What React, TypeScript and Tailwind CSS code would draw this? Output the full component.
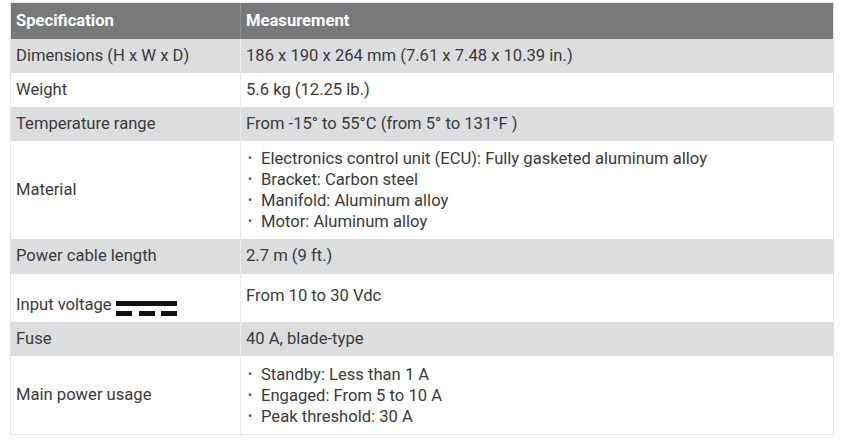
import * as React from 'react';

type Row = { spec: React.ReactNode; value: React.ReactNode; h: string; shaded: boolean };

const Bullets: React.FC<{ items: string[] }> = ({ items }) => (
  <ul className="leading-[21px]">
    {items.map(item => (
      <li key={item} className="flex">
        <span className="w-[15px] pl-[2px] text-[12px] text-[#555]">•</span>
        <span>{item}</span>
      </li>
    ))}
  </ul>
);

// DC symbol: solid line over three dashes
const DcSymbol: React.FC = () => (
  <svg width="61" height="15" viewBox="0 0 61 15" className="ml-[4px] mb-[1px]">
    <rect x="0" y="0" width="61" height="5" fill="#111" />
    <rect x="0" y="10" width="16" height="5" fill="#111" />
    <rect x="23" y="10" width="16" height="5" fill="#111" />
    <rect x="45" y="10" width="16" height="5" fill="#111" />
  </svg>
);

const rows: Row[] = [
  { spec: 'Dimensions (H x W x D)', value: '186 x 190 x 264 mm (7.61 x 7.48 x 10.39 in.)', h: 'h-[34px]', shaded: true },
  { spec: 'Weight', value: '5.6 kg (12.25 lb.)', h: 'h-[34px]', shaded: false },
  { spec: 'Temperature range', value: 'From -15° to 55°C (from 5° to 131°F )', h: 'h-[34px]', shaded: true },
  {
    spec: 'Material',
    value: (
      <Bullets
        items={[
          'Electronics control unit (ECU): Fully gasketed aluminum alloy',
          'Bracket: Carbon steel',
          'Manifold: Aluminum alloy',
          'Motor: Aluminum alloy',
        ]}
      />
    ),
    h: 'h-[98px]',
    shaded: false,
  },
  { spec: 'Power cable length', value: '2.7 m (9 ft.)', h: 'h-[35px]', shaded: true },
  {
    spec: (
      <span className="flex items-end pt-[14px]">
        Input voltage
        <DcSymbol />
      </span>
    ),
    value: <span className="block pb-[4px]">From 10 to 30 Vdc</span>,
    h: 'h-[48px]',
    shaded: false,
  },
  { spec: 'Fuse', value: '40 A, blade-type', h: 'h-[34px]', shaded: true },
  {
    spec: 'Main power usage',
    value: <Bullets items={['Standby: Less than 1 A', 'Engaged: From 5 to 10 A', 'Peak threshold: 30 A']} />,
    h: 'h-[78px]',
    shaded: false,
  },
];

const App: React.FC = () => {
  return (
    <div className="w-[843px] h-[440px] bg-white pt-[2px] pl-[10px] font-['Roboto',sans-serif] text-[16.6px] text-[#3a3a3a]">
      <div className="w-[824px] border border-[#e4e4e4] border-t-[#ececec]">
        {/* Header */}
        <div className="flex h-[36px] bg-[#77787a] text-white font-bold">
          <div className="w-[230px] flex items-center pl-[5px] border-r border-[#8d8e90]">Specification</div>
          <div className="flex-1 flex items-center pl-[5px]">Measurement</div>
        </div>
        {rows.map((row, i) => (
          <div key={i} className={`flex ${row.h} ${row.shaded ? 'bg-[#dcdddf]' : 'bg-white'}`}>
            <div className="w-[230px] flex items-center pl-[5px] border-r border-[#ececec]">{row.spec}</div>
            <div className="flex-1 flex items-center pl-[5px]">{row.value}</div>
          </div>
        ))}
      </div>
    </div>
  );
};

export default App;
